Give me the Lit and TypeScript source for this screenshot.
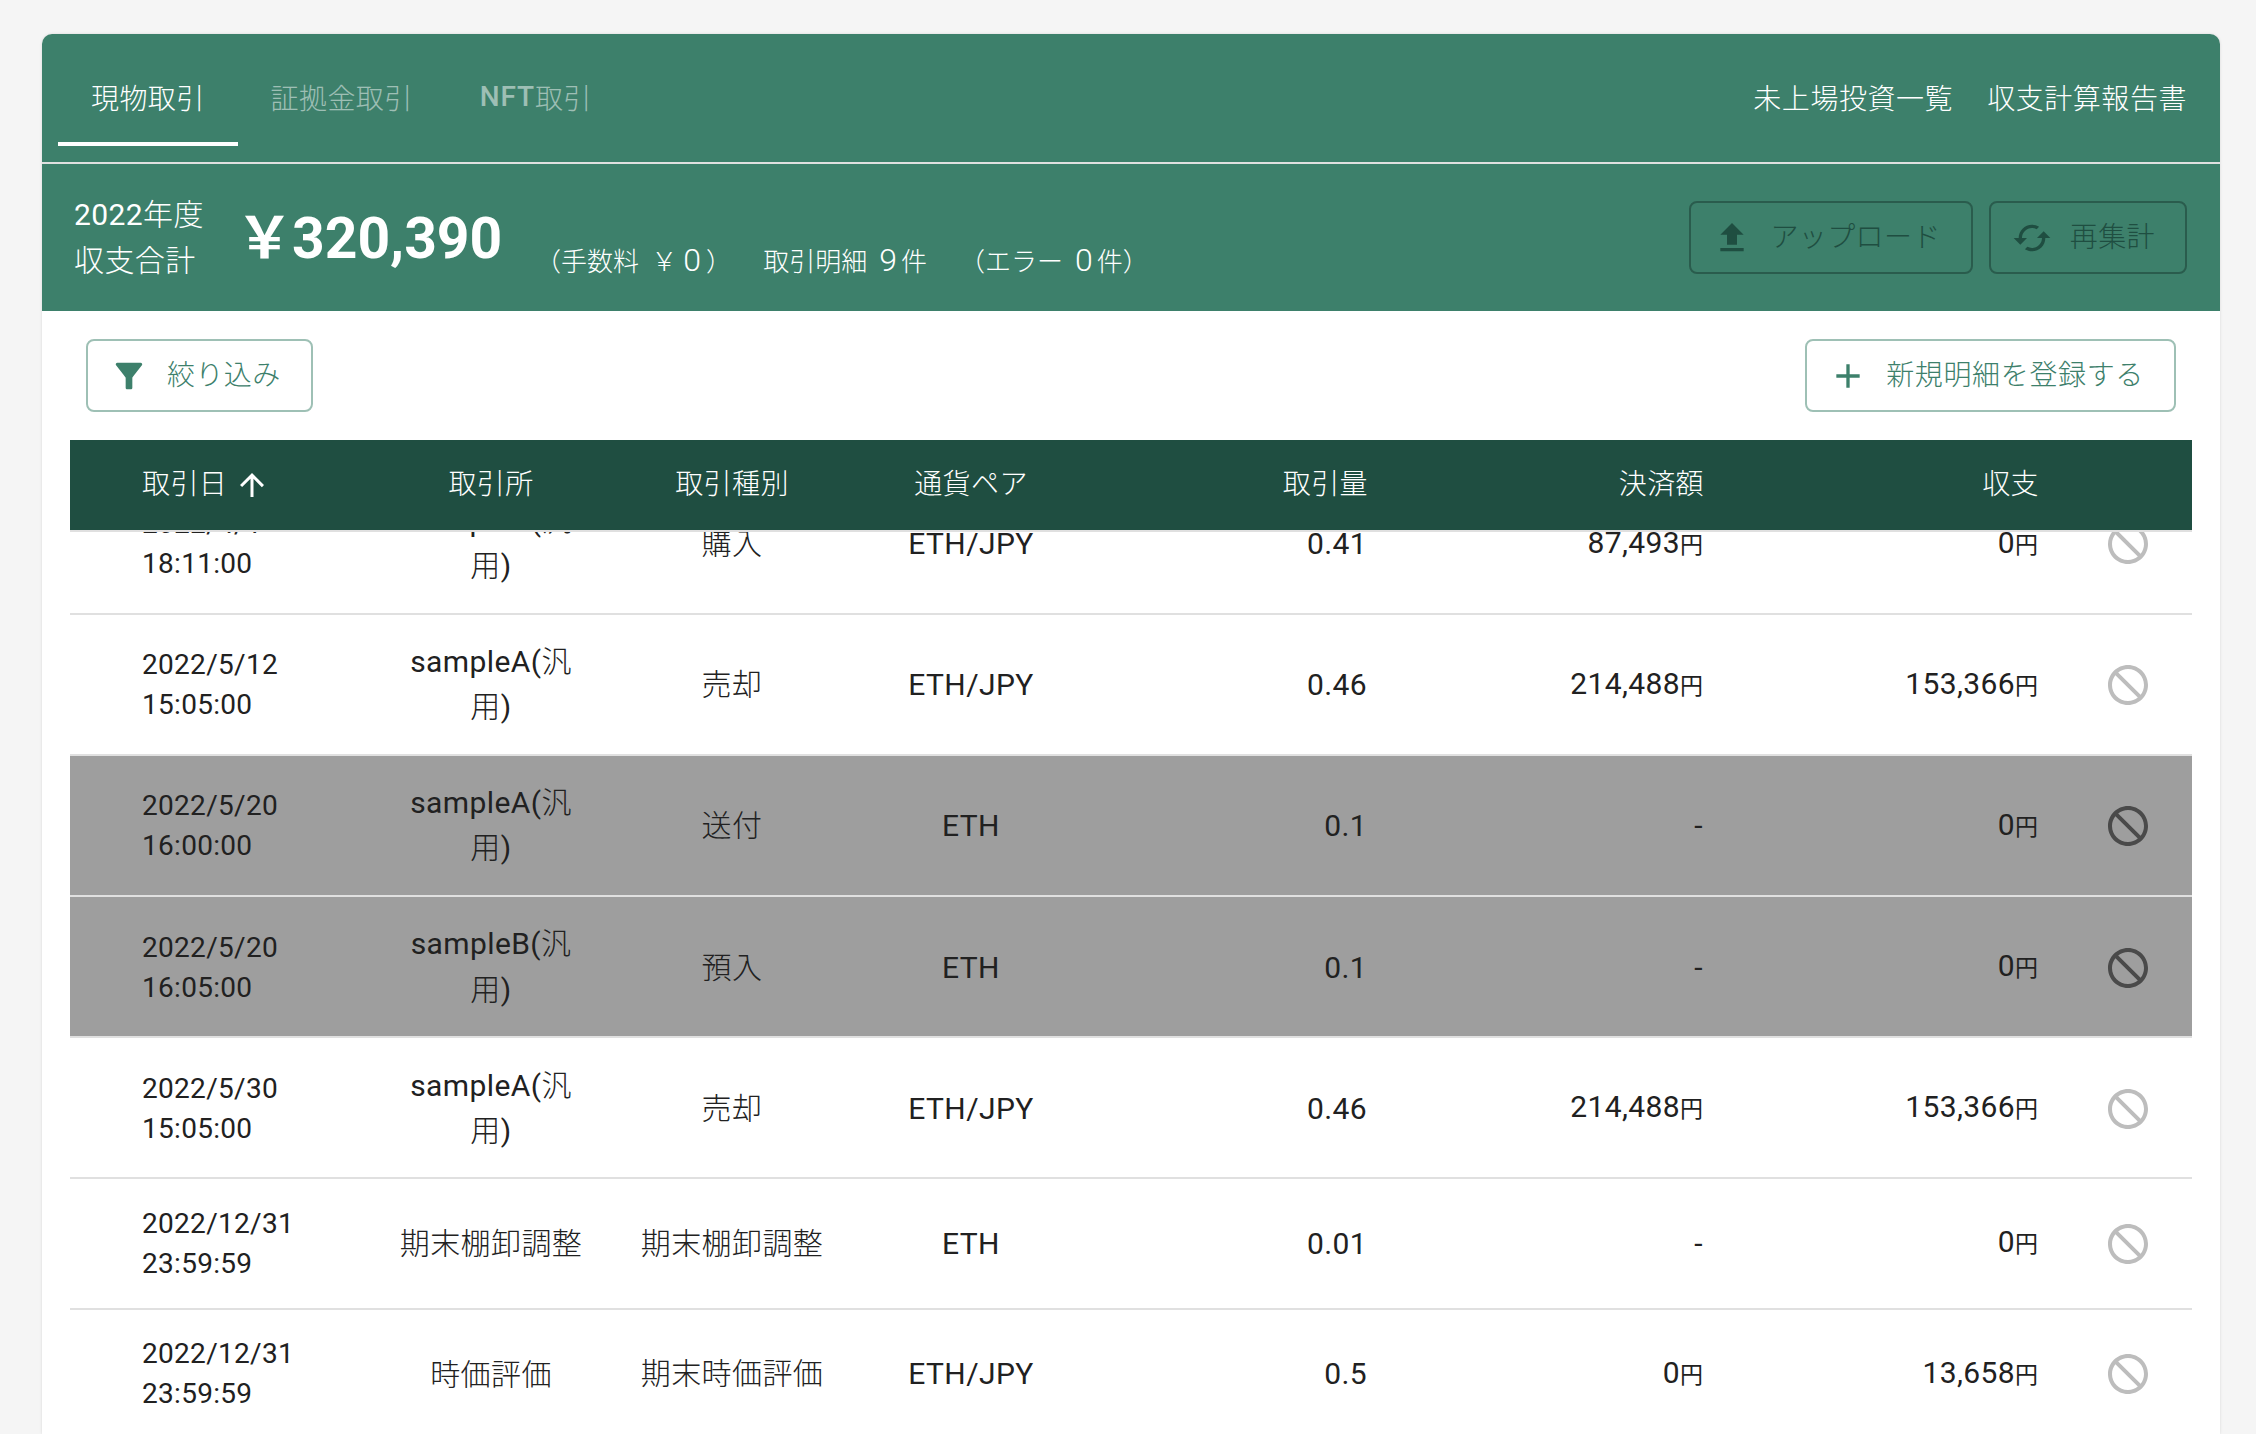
import { LitElement, html, css, svg } from "lit";
import { customElement } from "lit/decorators.js";

const P = {
  upload: "M9 16h6v-6h4l-7-7-7 7h4zm-4 2h14v2H5z",
  cached: "m19 8-4 4h3c0 3.31-2.69 6-6 6-1.01 0-1.97-.25-2.8-.7l-1.46 1.46C8.97 19.54 10.43 20 12 20c4.42 0 8-3.58 8-8h3l-4-4zM6 12c0-3.31 2.69-6 6-6 1.01 0 1.97.25 2.8.7l1.46-1.46C15.03 4.46 13.57 4 12 4c-4.42 0-8 3.58-8 8H1l4 4 4-4H6z",
  filter: "M4.25 5.61C6.27 8.2 10 13 10 13v6c0 .55.45 1 1 1h2c.55 0 1-.45 1-1v-6s3.72-4.8 5.74-7.39c.51-.66.04-1.61-.79-1.61H5.04c-.83 0-1.3.95-.79 1.61z",
  add: "M19 13h-6v6h-2v-6H5v-2h6V5h2v6h6v2z",
  arrow: "M4 12l1.41 1.41L11 7.83V20h2V7.83l5.58 5.59L20 12l-8-8-8 8z",
  block: "M12 2C6.48 2 2 6.48 2 12s4.48 10 10 10 10-4.48 10-10S17.52 2 12 2zm0 18c-4.42 0-8-3.58-8-8 0-1.85.63-3.55 1.69-4.9L16.9 18.31C15.55 19.37 13.85 20 12 20zm6.31-3.1L7.1 5.69C8.45 4.63 10.15 4 12 4c4.42 0 8 3.58 8 8 0 1.85-.63 3.55-1.69 4.9z",
};
const icon = (d: string, cls: string) =>
  html`<svg class=${cls} viewBox="0 0 24 24" fill="currentColor">${svg`<path d=${d}></path>`}</svg>`;

/* Latin runs render in regular weight; Japanese stays light, as in the reference. */
const t = (s: string) =>
  (s.match(/[\x00-\x7f]+|[^\x00-\x7f]+/g) || []).map((p) =>
    /^[\x00-\x7f]/.test(p) ? html`<span class="n">${p}</span>` : p
  );

interface Row { d: string; t: string; ex: string; kind: string; pair: string; qty: string; amt: string; pl: string; muted?: boolean; short?: boolean; }
const rows: Row[] = [
  { d: "2022/4/1", t: "18:11:00", ex: "sampleA(汎用)", kind: "購入", pair: "ETH/JPY", qty: "0.41", amt: "87,493", pl: "0" },
  { d: "2022/5/12", t: "15:05:00", ex: "sampleA(汎用)", kind: "売却", pair: "ETH/JPY", qty: "0.46", amt: "214,488", pl: "153,366" },
  { d: "2022/5/20", t: "16:00:00", ex: "sampleA(汎用)", kind: "送付", pair: "ETH", qty: "0.1", amt: "-", pl: "0", muted: true },
  { d: "2022/5/20", t: "16:05:00", ex: "sampleB(汎用)", kind: "預入", pair: "ETH", qty: "0.1", amt: "-", pl: "0", muted: true },
  { d: "2022/5/30", t: "15:05:00", ex: "sampleA(汎用)", kind: "売却", pair: "ETH/JPY", qty: "0.46", amt: "214,488", pl: "153,366" },
  { d: "2022/12/31", t: "23:59:59", ex: "期末棚卸調整", kind: "期末棚卸調整", pair: "ETH", qty: "0.01", amt: "-", pl: "0", short: true },
  { d: "2022/12/31", t: "23:59:59", ex: "時価評価", kind: "期末時価評価", pair: "ETH/JPY", qty: "0.5", amt: "0", pl: "13,658", short: true },
];
const yen = (v: string) => (v === "-" ? t(v) : html`${t(v)}<span class="yen">円</span>`);

@customElement("app-root")
export class AppRoot extends LitElement {
  static styles = css`
    :host {
      display: block;
      height: 1434px;
      overflow: hidden;
      background: #f5f5f5;
      font-family: Roboto, "Noto Sans CJK JP", sans-serif;
      font-size: 28px;
      font-weight: 300;
      color: #212121;
      letter-spacing: 0.4px;
    }
    .n { font-weight: 400; }
    .page { padding: 34px 36px 0 42px; }
    .card {
      background: #fff;
      border-radius: 10px 10px 0 0;
      overflow: hidden;
      box-shadow: 0 0 3px rgba(0, 0, 0, 0.12);
      height: 1400px;
    }
    .nav {
      height: 128px;
      background: #3d806b;
      display: flex;
      justify-content: space-between;
      padding: 16px 33px 0 16px;
      box-sizing: border-box;
    }
    .tabs, .links { display: flex; }
    .links { gap: 34px; color: #fff; height: 96px; align-items: center; padding-bottom: 3px; box-sizing: border-box; letter-spacing: 0.55px; }
    .tab {
      height: 96px;
      box-sizing: border-box;
      padding: 0 33px 3px;
      display: flex;
      align-items: center;
      color: rgba(255, 255, 255, 0.5);
    }
    .tab.on { color: #fff; border-bottom: 4px solid #fff; padding-bottom: 0; padding-top: 1px; }
    .nft { font-weight: 500; letter-spacing: 0.9px; margin-left: 1px; }
    .rule { height: 2px; background: #e0e0e0; }
    .summary {
      height: 147px;
      background: #3d806b;
      color: #fff;
      display: flex;
      align-items: center;
      justify-content: space-between;
      padding: 0 33px 0 32px;
    }
    .totals { display: flex; align-items: center; }
    .label { font-size: 30px; line-height: 46px; width: 170px; flex: none; }
    .amount { font-size: 57px; font-weight: 700; letter-spacing: 0; width: 299px; margin-left: -8px; margin-bottom: 10px; white-space: nowrap; flex: none; }
    .big-yen { display: inline-block; width: 56px; font-weight: 700; }
    .sub { font-size: 26px; padding-top: 46px; display: flex; white-space: pre; line-height: 46px; letter-spacing: 0; }
    .sub b { font-weight: 300; font-size: 32px; margin: 0 4px 0 12px; }
    .sub .yn { margin-left: 6px; }
    .sub .yn + b { margin: 0 5px 0 6px; }
    .sub .gap1 { margin-left: 31px; }
    .sub .gap2 { margin-left: 32px; }
    .actions { display: flex; gap: 16px; }
    .btn {
      height: 73px;
      box-sizing: border-box;
      display: flex;
      align-items: center;
      gap: 18px;
      padding: 0 30px 0 21px;
      border-radius: 8px;
      border: 2px solid;
      white-space: nowrap;
    }
    .btn span { padding-bottom: 6px; }
    .btn .wide { letter-spacing: 0.65px; }
    .dark { color: #1f4e41; border-color: #2a5c4d; }
    .light { color: #3d806b; border-color: #9ec0b5; background: #fff; }
    .i40 { width: 40px; height: 40px; flex: none; }
    .toolbar {
      height: 129px;
      box-sizing: border-box;
      padding: 28px 44px 0 44px;
      display: flex;
      justify-content: space-between;
      align-items: flex-start;
    }
    .table { margin: 0 28px; }
    .grid {
      display: grid;
      grid-template-columns: 300px 242px 240px 238px 305px 336px 335px 126px;
    }
    .head {
      height: 90px;
      background: #1f4e41;
      color: #fff;
      border-bottom: 2px solid #e0e0e0;
      box-sizing: content-box;
    }
    .head .c { padding-bottom: 6px; }
    .head .c.e { padding-right: 27px; }
    .c { display: flex; align-items: center; min-width: 0; padding: 0 28px; box-sizing: border-box; }
    .c.s { justify-content: flex-start; padding-left: 72px; padding-right: 0; }
    .c.m { justify-content: center; text-align: center; }
    .c.e { justify-content: flex-end; }
    .c.i { justify-content: center; padding: 0 2px 0 0; }
    .arrow { width: 36px; height: 36px; margin: 0 0 -6px 7px; flex: none; }
    .clip { height: 900px; overflow: hidden; }
    .body { margin-top: -58.5px; }
    .row {
      border-bottom: 2px solid #e0e0e0;
      padding: 24.35px 0;
      line-height: 40px;
      font-size: 30px;
    }
    .row.muted { background: #9e9e9e; }
    .date { font-size: 28px; letter-spacing: 0.3px; padding-top: 2px; }
    .row.short .date { padding-top: 0; }
    .row:not(.short) .v { padding-top: 2px; }
    .ex { line-height: 45.25px; }
    .yen { font-size: 23px; font-weight: 400; letter-spacing: 0; }
    .block { width: 48px; height: 48px; color: #bdbdbd; }
    .muted .block { color: #4a4a4a; }
  `;

  render() {
    return html`<div class="page"><div class="card">
      <div class="nav">
        <div class="tabs">
          <div class="tab on">現物取引</div>
          <div class="tab">証拠金取引</div>
          <div class="tab"><span class="nft">NFT</span>取引</div>
        </div>
        <div class="links"><span>未上場投資一覧</span><span>収支計算報告書</span></div>
      </div>
      <div class="rule"></div>
      <div class="summary">
        <div class="totals">
          <div class="label">${t("2022")}年度<br />収支合計</div>
          <div class="amount"><span class="big-yen">￥</span>320,390</div>
          <div class="sub"><span>（手数料 <span class="yn">￥</span><b>0</b>）</span><span class="gap1">取引明細<b>9</b>件</span><span class="gap2">（エラー<b>0</b>件）</span></div>
        </div>
        <div class="actions">
          <div class="btn dark">${icon(P.upload, "i40")}<span>アップロード</span></div>
          <div class="btn dark">${icon(P.cached, "i40")}<span>再集計</span></div>
        </div>
      </div>
      <div class="toolbar">
        <div class="btn light">${icon(P.filter, "i40")}<span>絞り込み</span></div>
        <div class="btn light">${icon(P.add, "i40")}<span class="wide">新規明細を登録する</span></div>
      </div>
      <div class="table">
        <div class="grid head">
          <div class="c s">取引日${icon(P.arrow, "arrow")}</div>
          <div class="c m">取引所</div>
          <div class="c m">取引種別</div>
          <div class="c m">通貨ペア</div>
          <div class="c e">取引量</div>
          <div class="c e">決済額</div>
          <div class="c e">収支</div>
          <div class="c i"></div>
        </div>
        <div class="clip"><div class="body">
          ${rows.map(
            (r) => html`<div class="grid row ${r.muted ? "muted" : ""} ${r.short ? "short" : ""}">
              <div class="c s"><div class="date">${t(r.d)}<br />${t(r.t)}</div></div>
              <div class="c m ex"><div>${t(r.ex)}</div></div>
              <div class="c m v">${r.kind}</div>
              <div class="c m v">${t(r.pair)}</div>
              <div class="c e v">${t(r.qty)}</div>
              <div class="c e v"><div>${yen(r.amt)}</div></div>
              <div class="c e v"><div>${yen(r.pl)}</div></div>
              <div class="c i v">${icon(P.block, "block")}</div>
            </div>`
          )}
        </div></div>
      </div>
    </div></div>`;
  }
}
